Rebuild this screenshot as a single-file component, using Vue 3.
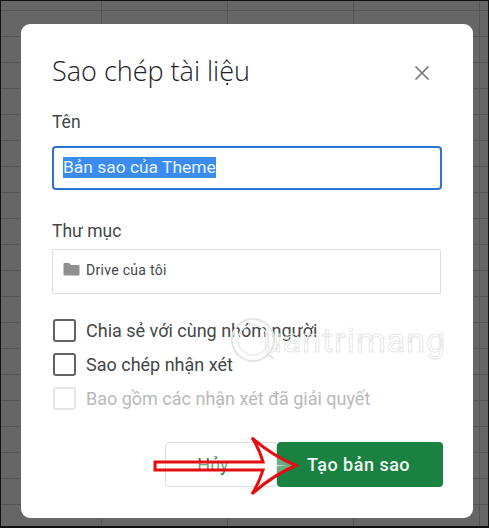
<script setup>
import { ref } from 'vue';

const fileName = 'Bản sao của Theme';
const options = ref([
  { id: 1, label: 'Chia sẻ với cùng nhóm người', disabled: false },
  { id: 2, label: 'Sao chép nhận xét', disabled: false },
  { id: 3, label: 'Bao gồm các nhận xét đã giải quyết', disabled: true },
]);
</script>

<template>
  <div class="page">
    <div class="dialog">
      <div class="head">
        <h1>Sao chép tài liệu</h1>
        <svg class="close" width="16" height="16" viewBox="0 0 16 16">
          <path d="M1.5 1.5 L14.5 14.5 M14.5 1.5 L1.5 14.5" stroke="#757575" stroke-width="1.7" fill="none" />
        </svg>
      </div>

      <div class="label name-label">Tên</div>
      <div class="name-input"><span class="selected">{{ fileName }}</span></div>

      <div class="label folder-label">Thư mục</div>
      <div class="folder">
        <svg width="17" height="13" viewBox="0 0 17 13">
          <path d="M0.5 1.2 Q0.5 0 1.7 0 H6 L8 2 H15.5 Q16.5 2 16.5 3 V11.5 Q16.5 12.5 15.5 12.5 H1.5 Q0.5 12.5 0.5 11.5 Z" fill="#8f8f8f" />
        </svg>
        <span>Drive của tôi</span>
      </div>

      <div class="options">
        <div v-for="opt in options" :key="opt.id" class="option" :class="{ disabled: opt.disabled }">
          <span class="box"></span>
          <span>{{ opt.label }}</span>
        </div>
      </div>

      <div class="actions">
        <button class="cancel">Hủy</button>
        <button class="create">Tạo bản sao</button>
      </div>

      <!-- watermark -->
      <div class="watermark">
        <svg width="50" height="50" viewBox="0 0 50 50">
          <circle cx="25" cy="25" r="21" fill="none" stroke="#e4e4e4" stroke-width="2" />
          <circle cx="25" cy="25" r="15" fill="none" stroke="#ececec" stroke-width="1.5" />
          <path d="M38 38 L46 44" stroke="#e4e4e4" stroke-width="2" />
        </svg>
        <span>uantrimang</span>
      </div>

      <!-- red arrow over the buttons -->
      <svg class="arrow" width="146" height="62" viewBox="0 0 146 62">
        <path d="M2 27 H110 Q106 13 99 3 Q120 21 143 30.5 Q120 40 99 59 Q106 48 110 35 H2 Z" fill="#fff" fill-opacity="0.35" stroke="#e30d12" stroke-width="3" stroke-linejoin="miter" />
        <path d="M108 29 Q120 30.5 134 30.5 Q120 31 108 33 Z" fill="#fff" />
      </svg>
    </div>
  </div>
</template>

<style scoped>
.page {
  box-sizing: border-box;
  width: 489px;
  height: 528px;
  padding: 24px 16px 10px 21px;
  background-color: #666666;
  background-image:
    linear-gradient(#555555 1px, transparent 1px),
    linear-gradient(90deg, #555555 1px, transparent 1px);
  background-size: 126px 26px;
  background-position: 100px 9px;
  border: 1px solid #111111;
  border-bottom-width: 2px;
  font-family: Roboto, "Noto Sans", sans-serif;
}

.dialog {
  position: relative;
  box-sizing: border-box;
  width: 452px;
  height: 494px;
  margin-left: -1px;
  margin-top: -1px;
  padding: 29px 31px 0;
  background: #fff;
  border-radius: 9px;
  color: #3c4043;
}

.head {
  display: flex;
  justify-content: space-between;
  align-items: center;
}

h1 {
  margin: 0;
  font-family: "Open Sans", Roboto, sans-serif;
  font-size: 27px;
  font-weight: 300;
  line-height: 36px;
  color: #202124;
}

.close {
  margin: 3px 12px 0 0;
}

.label {
  font-size: 17.5px;
  line-height: 20px;
  color: #444746;
}

.name-label {
  margin-top: 23px;
}

.name-input {
  box-sizing: border-box;
  width: 390px;
  height: 44px;
  margin-top: 14px;
  padding: 9px 9px;
  border: 2px solid #2b74d0;
  border-radius: 4px;
  font-size: 17.4px;
  line-height: 21px;
}

.selected {
  display: inline-block;
  background: #3a8cf0;
  color: #e9f2fd;
}

.folder-label {
  margin-top: 31px;
}

.folder {
  box-sizing: border-box;
  display: flex;
  align-items: center;
  gap: 6px;
  width: 389px;
  height: 45px;
  margin-top: 8px;
  padding: 0 10px 4px;
  border: 1px solid #dadce0;
  border-radius: 2px;
  font-size: 14px;
  letter-spacing: 0.3px;
  color: #444746;
}

.options {
  display: flex;
  flex-direction: column;
  gap: 12px;
  margin-top: 25px;
}

.option {
  display: flex;
  align-items: center;
  gap: 10px;
  height: 22px;
  padding-left: 1px;
  font-size: 18px;
  color: #444746;
}

.box {
  box-sizing: border-box;
  flex: none;
  width: 23px;
  height: 23px;
  border: 2px solid #5f6368;
  border-radius: 3px;
}

.option.disabled {
  color: #b9b9b9;
}

.option.disabled .box {
  border-color: #e6e6e6;
}

.actions {
  display: flex;
  justify-content: flex-end;
  gap: 0;
  margin: 33px -1px 0 0;
}

button {
  height: 45px;
  border-radius: 4px;
  font-family: Roboto, sans-serif;
  font-size: 18px;
}

.cancel {
  width: 112px;
  padding: 0 16px 0 0;
  background: #fff;
  border: 1px solid #dadce0;
  color: #1e7e42;
}

.create {
  width: 166px;
  padding: 0 3px 0 0;
  background: #1a8140;
  border: none;
  color: #f2f8f4;
  font-weight: 500;
  letter-spacing: 0.5px;
}

.watermark {
  position: absolute;
  left: 207px;
  top: 291px;
  display: flex;
  align-items: center;
  font-size: 34px;
  letter-spacing: 1px;
  color: transparent;
  -webkit-text-stroke: 1px #e8e8e8;
  pointer-events: none;
}

.watermark svg {
  margin-right: -15px;
}

.arrow {
  position: absolute;
  left: 132px;
  top: 411px;
}
</style>
